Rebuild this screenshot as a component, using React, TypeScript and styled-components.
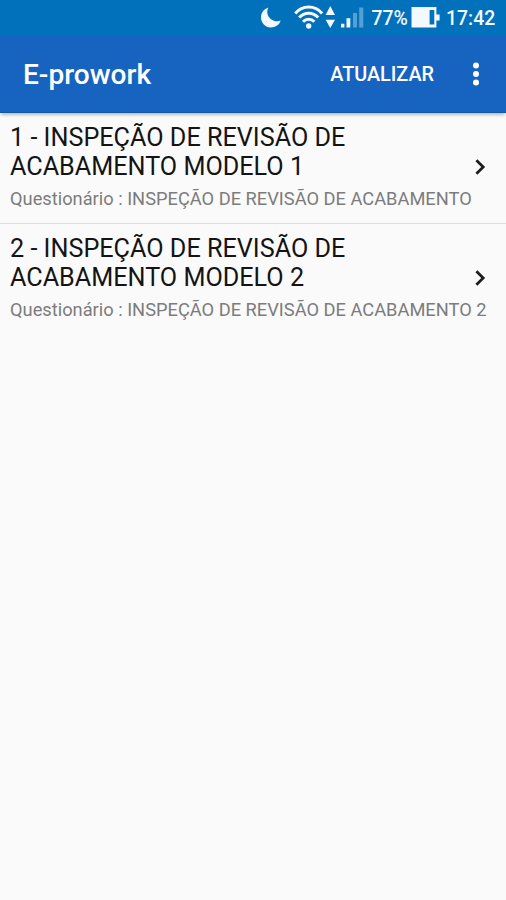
import React from "react";
import styled, { createGlobalStyle } from "styled-components";

const Global = createGlobalStyle`
  * { box-sizing: border-box; }
  body { margin: 0; background: #fafafa; font-family: Roboto, sans-serif; }
`;
const Screen = styled.div`
  width: 506px; height: 900px; background: #fafafa; overflow: hidden;
  display: flex; flex-direction: column;
`;
const StatusBar = styled.div`
  height: 35px; flex: none; color: #f2f9ff; display: flex;
  background: #0271bb;
`;
const StatusIcons = styled.svg`
  display: block; flex: none; margin-left: 250px;
`;
const Percent = styled.span`
  width: 40px; font-size: 19.4px; line-height: 37px; white-space: nowrap; font-weight: 500;
  padding-left: 0.5px;
`;
const Battery = styled.svg`display: block; flex: none;`;
const Clock = styled.span`
  font-size: 19.4px; line-height: 37px; font-weight: 500; margin-left: 5px;
`;
const Toolbar = styled.header`
  height: 78px; flex: none; background: #1763c0; color: #fff; display: flex; align-items: center;
  padding-left: 23px; box-shadow: 0 3px 3px -1px rgba(0,0,0,.25); z-index: 1;
  border-bottom: 1px solid #1158a8;
`;
const Title = styled.h1`
  margin: 2px 0 0; flex: 1; font-size: 28.1px; font-weight: 500; line-height: 32px;
`;
const Action = styled.button`
  border: 0; background: none; color: inherit; font: 500 19.8px/24px Roboto, sans-serif;
  padding: 2px 0 0; margin-right: 38px;
`;
const More = styled.svg`display: block; margin-right: 26px;`;
const Row = styled.article`
  height: 110px; display: flex; flex-direction: column; padding: 10px 0 0 10px;
  & + & { border-top: 1px solid #dedede; height: 111px; }
`;
const RowMain = styled.div`display: flex; align-items: flex-end;`;
const Name = styled.h2`
  margin: 0; width: 463px; font-size: 25.2px; line-height: 29px; font-weight: 400; color: #141414;
  white-space: pre-line;
`;
const Detail = styled.p`
  margin: 7px 0 0; font-size: 18.27px; line-height: 22px; color: #7c7c7c; white-space: nowrap;
`;
const Chevron = styled.svg`display: block; margin-bottom: 5px;`;

const items = [
  { name: "1 - INSPEÇÃO DE REVISÃO DE\nACABAMENTO MODELO 1", detail: "Questionário : INSPEÇÃO DE REVISÃO DE ACABAMENTO" },
  { name: "2 - INSPEÇÃO DE REVISÃO DE\nACABAMENTO MODELO 2", detail: "Questionário : INSPEÇÃO DE REVISÃO DE ACABAMENTO 2" },
];

export default function App() {
  return (
    <Screen>
      <Global />
      <StatusBar>
        <StatusIcons width="121" height="35" viewBox="250 0 121 35" fill="#f2f9ff">
          <path d="M268.5 7.6C263.8 9 261 13 261 17.5C261 23 265.4 27.4 270.8 27.4C275.6 27.4 279.6 24.8 280.6 20.5C275.5 22.6 268.6 19.6 267.4 13.4C267.1 11 267.5 9.2 268.5 7.6Z" />
          <g fill="none" stroke="#f2f9ff" strokeWidth="3">
            <path d="M295.3 13.4C302.5 5 314.9 5 322.1 13.4" />
            <path d="M299.2 17.6C304.4 11.9 313 11.9 318.2 17.6" />
            <path d="M303 21.7C306.2 18.4 311.2 18.4 314.4 21.7" />
          </g>
          <circle cx="308.7" cy="26" r="2.7" />
          <path d="M330.3 6L335 15H325.6ZM330.3 28L325.6 19.8H335Z" />
          <path d="M341 23.8H344.4V27.5H341ZM346.5 18.3H350.3V27.5H346.5Z" />
          <path d="M353 13H357V27.5H353ZM359.2 7.5H363.3V27.5H359.2Z" opacity=".35" />
        </StatusIcons>
        <Percent>77%</Percent>
        <Battery width="30" height="35" viewBox="411 0 30 35" fill="#f2f9ff">
          <path fillRule="evenodd" d="M411.5 7H436.4V14.5H439.6V20.5H436.4V27.5H411.5ZM429.6 10V24.6H434.3V10Z" />
        </Battery>
        <Clock>17:42</Clock>
      </StatusBar>
      <Toolbar>
        <Title>E-prowork</Title>
        <Action>ATUALIZAR</Action>
        <More width="8" height="24" viewBox="0 0 8 24" fill="#fff">
          <circle cx="4" cy="3.5" r="3" /><circle cx="4" cy="12" r="3" /><circle cx="4" cy="20.5" r="3" />
        </More>
      </Toolbar>
      <main>
        {items.map((it) => (
          <Row key={it.name}>
            <RowMain>
              <Name>{it.name}</Name>
              <Chevron width="14" height="18" viewBox="0 0 14 18" fill="none" stroke="#1c1c1c" strokeWidth="2.7">
                <path d="M3.4 2.3l6.8 6.7-6.8 6.7" />
              </Chevron>
            </RowMain>
            <Detail>{it.detail}</Detail>
          </Row>
        ))}
      </main>
    </Screen>
  );
}
